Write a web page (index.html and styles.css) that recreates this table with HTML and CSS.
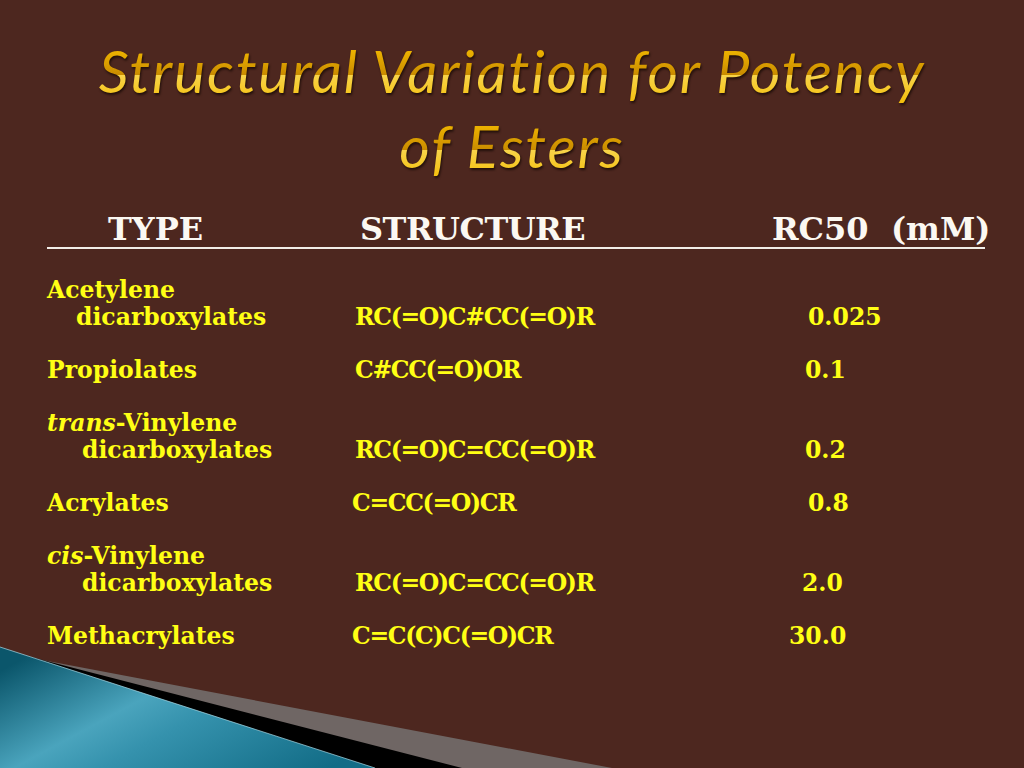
FILE: index.html
```html
<!DOCTYPE html>
<html lang="en">
<head>
<meta charset="utf-8">
<title>Structural Variation for Potency of Esters</title>
<link rel="stylesheet" href="styles.css">
</head>
<body>
<div class="slide">
  <h1 class="title">Structural Variation for Potency<br>of Esters</h1>
  <div class="table">
    <div class="head">
      <span class="h-type">TYPE</span>
      <span class="h-struct">STRUCTURE</span>
      <span class="h-val">RC50  (mM)</span>
    </div>
    <div class="row">
      <div class="type">Acetylene<br><span class="ind ind-a">dicarboxylates</span></div>
      <div class="struct">RC(=O)C#CC(=O)R</div>
      <div class="val v-r3">0.025</div>
    </div>
    <div class="row">
      <div class="type">Propiolates</div>
      <div class="struct">C#CC(=O)OR</div>
      <div class="val">0.1</div>
    </div>
    <div class="row">
      <div class="type"><i>trans</i>-Vinylene<br><span class="ind">dicarboxylates</span></div>
      <div class="struct">RC(=O)C=CC(=O)R</div>
      <div class="val">0.2</div>
    </div>
    <div class="row">
      <div class="type">Acrylates</div>
      <div class="struct s-left">C=CC(=O)CR</div>
      <div class="val v-r3">0.8</div>
    </div>
    <div class="row">
      <div class="type"><i>cis</i>-Vinylene<br><span class="ind">dicarboxylates</span></div>
      <div class="struct">RC(=O)C=CC(=O)R</div>
      <div class="val v-l3">2.0</div>
    </div>
    <div class="row">
      <div class="type">Methacrylates</div>
      <div class="struct s-left">C=C(C)C(=O)CR</div>
      <div class="val v-l16">30.0</div>
    </div>
  </div>
  <svg class="deco" viewBox="0 640 640 128" width="640" height="128" aria-hidden="true">
    <defs>
      <linearGradient id="teal" x1="0" y1="0.2" x2="1" y2="0.8">
        <stop offset="0" stop-color="#0b566b"/>
        <stop offset="0.38" stop-color="#4aa4bd"/>
        <stop offset="0.55" stop-color="#3592ad"/>
        <stop offset="1" stop-color="#126c86"/>
      </linearGradient>
    </defs>
    <polygon points="0,652 612,768 0,768" fill="#6f6664"/>
    <polygon points="0,649 462,768 0,768" fill="#000"/>
    <polygon points="0,647 375,768 0,768" fill="url(#teal)"/>
    <line x1="0" y1="647" x2="375" y2="768" stroke="#a9dbe8" stroke-width="1" opacity="0.7"/>
  </svg>
</div>
</body>
</html>
```

FILE: styles.css
```css
html, body {
  margin: 0;
  padding: 0;
}
body {
  background: #4d271f;
}
.slide {
  position: relative;
  width: 1024px;
  height: 768px;
  overflow: hidden;
  background: #4d271f;
}
.title {
  margin: 0;
  padding: 33px 0 0 0;
  text-align: center;
  font-family: Lato, "Open Sans", sans-serif;
  font-style: italic;
  font-weight: 400;
  font-size: 59px;
  line-height: 75px;
  letter-spacing: 1.8px;
  color: #f2b705;
  background: linear-gradient(180deg, #f8d44a 0%, #f4bd06 40%, #eab000 70%, #c98b00 100%);
  background-size: 100% 75px;
  -webkit-background-clip: text;
  background-clip: text;
  -webkit-text-fill-color: transparent;
  filter: drop-shadow(1px 2px 1px rgba(20, 8, 4, 0.75));
}
.table {
  margin: 0 0 0 47px;
  font-family: "DejaVu Serif", serif;
  font-weight: 700;
}
.head {
  display: grid;
  grid-template-columns: 313px 412px auto;
  width: 938px;
  margin-top: 28px;
  font-size: 32px;
  line-height: 36px;
  color: #fbf8f2;
  border-bottom: 2px solid #f2eee8;
}
.h-type {
  padding-left: 61px;
}
.h-struct {
  letter-spacing: -0.5px;
}
.h-val {
  white-space: pre;
}
.row {
  display: grid;
  grid-template-columns: 305px 453px auto;
  align-items: end;
  font-size: 23.5px;
  line-height: 26.6px;
  color: #ffff14;
  margin-bottom: 26.6px;
}
.head + .row {
  margin-top: 28px;
}
.type i {
  font-style: italic;
}
.ind {
  padding-left: 35px;
}
.ind-a {
  padding-left: 29px;
}
.struct {
  padding-left: 3px;
  letter-spacing: -1.3px;
}
.s-left {
  padding-left: 0;
}
.v-r3 {
  padding-left: 3px;
}
.v-l3 {
  margin-left: -3px;
}
.v-l16 {
  margin-left: -16px;
}
.deco {
  position: absolute;
  left: 0;
  bottom: 0;
  display: block;
}
```
